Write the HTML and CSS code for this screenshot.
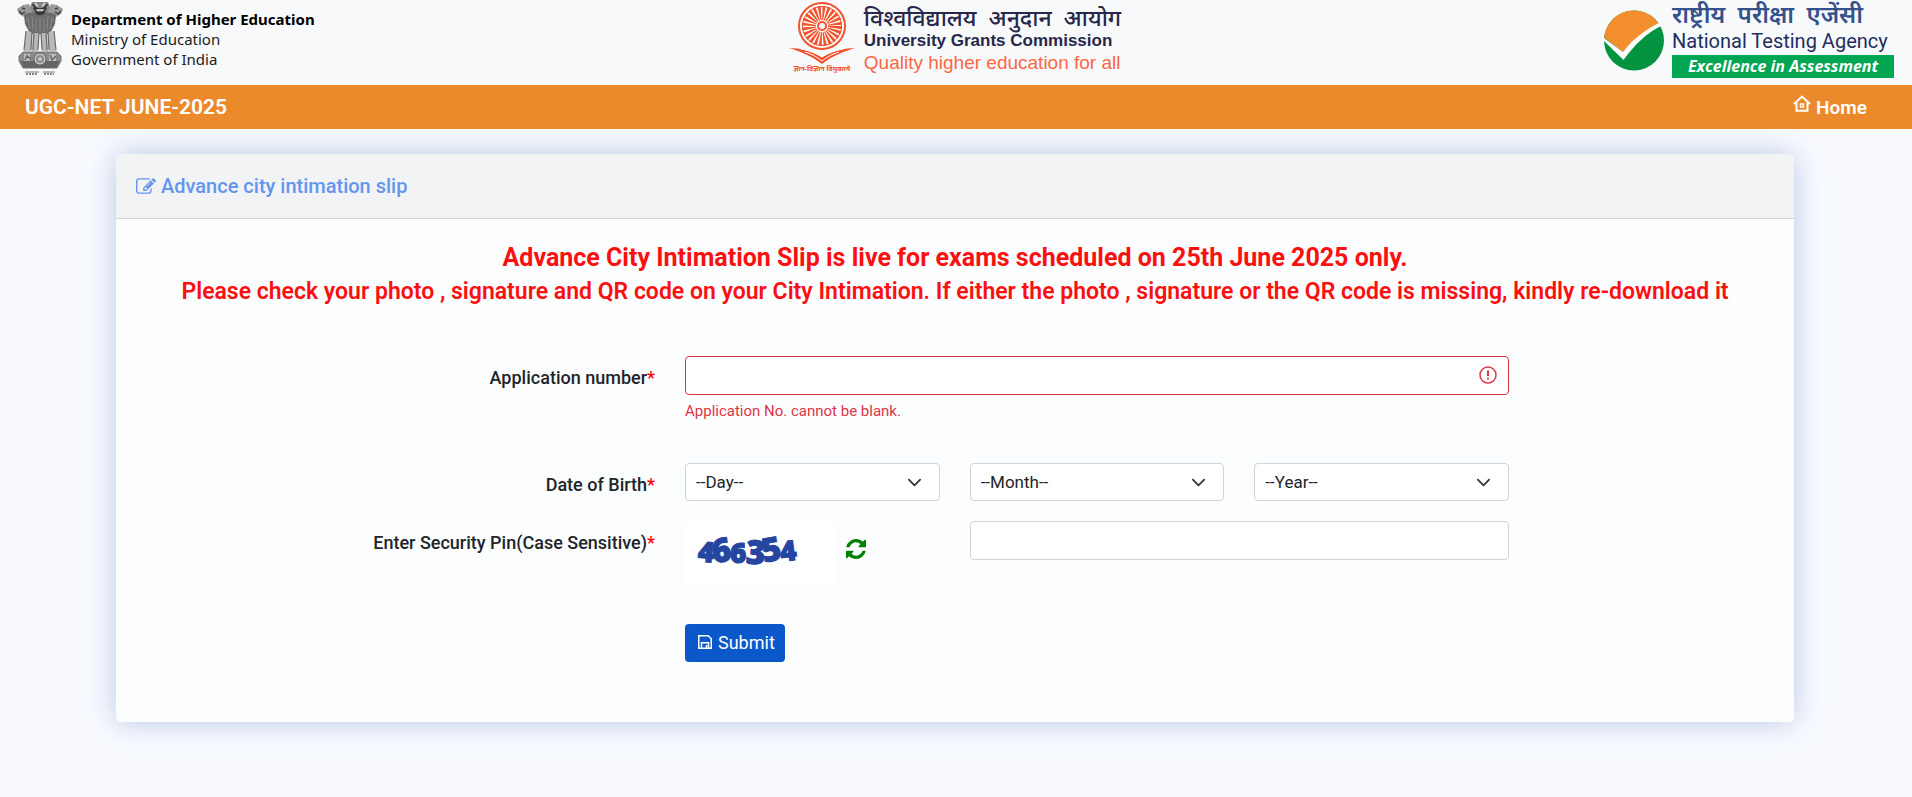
FILE: index.html
```html
<!DOCTYPE html>
<html lang="en">
<head>
<meta charset="utf-8">
<title>UGC-NET June 2025</title>
<link rel="stylesheet" href="styles.css">
</head>
<body>
<header class="masthead">
  <div class="brand brand-dept">
    <svg class="emblem" viewBox="0 0 48 76" aria-hidden="true">
      <path d="M16 2h16l3 8-2 8H15l-2-8z" fill="#858585"/>
      <path d="M7 5l6-1 3 7-1 8-3 3-4-5-5-3-2-5z" fill="#999"/>
      <path d="M41 5l-6-1-3 7 1 8 3 3 4-5 5-3 2-5z" fill="#999"/>
      <path d="M3 11l3 3 3-2M45 11l-3 3-3-2M6 8l3 1M42 8l-3 1" stroke="#444" stroke-width="1.5" fill="none"/>
      <path d="M8 15c4-4 28-4 32 0l-1 9-4 8-4 2H17l-4-2-4-8z" fill="#6b6b6b"/>
      <path d="M17 4c1 4 3 5 7 5s6-1 7-5M18 8c1 6 11 6 12 0M20 12c1 3 7 3 8 0" stroke="#303030" stroke-width="1.5" fill="none"/>
      <path d="M19 3l3 3M29 3l-3 3M21 10h6" stroke="#ddd" stroke-width="1.5"/>
      <path d="M12 17l2 12M16 16l1 15M20 18v14M24 17v15M28 18v14M32 16l-1 15M36 17l-2 12M10 20l3 2M38 20l-3 2" stroke="#8c8c8c" stroke-width="1"/>
      <path d="M10 31l-2 20h7l1-19zM17 33l-1 18h6l1-18zM25 33l1 18h6l-1-18zM32 32l1 19h7l-2-20z" fill="#b9b9b9"/>
      <path d="M10 31L8 50M16 32l-1 18M18 33l-1 17M23 33l-1 17M25 33l1 17M30 33l1 17M32 32l1 18M38 31l2 19" stroke="#6a6a6a" stroke-width="1.2" fill="none"/>
      <path d="M7 52h34l4 4v5l-4 7H7l-4-7v-5z" fill="#8a8a8a" stroke="#777"/>
      <path d="M4 61l4 7h32l4-7z" fill="#666"/>
      <path d="M8 54h6v7H8zM33 54h7v7h-7z" fill="#bbb"/>
      <path d="M9 60l2-4 4 3M34 55l2 5 4-4" stroke="#666" stroke-width="1.5" fill="none"/>
      <circle cx="24" cy="59" r="6" fill="#c8c8c8" stroke="#666"/>
      <circle cx="24" cy="59" r="3" fill="none" stroke="#888" stroke-width="2"/>
      <path d="M9 72h14M27 72h12" stroke="#777"/>
      <path d="M10 74h12M28 74h10" stroke="#888" stroke-width="2" stroke-dasharray="2 1"/>
    </svg>
    <div class="dept-text">
      <strong>Department of Higher Education</strong>
      <span>Ministry of Education</span>
      <span>Government of India</span>
    </div>
  </div>
  <div class="brand brand-ugc">
    <div class="ugc-mark">
      <svg class="ugc-wheel" viewBox="0 0 66 62" aria-hidden="true">
        <circle cx="33" cy="24" r="23" fill="#fff" stroke="#f4512c" stroke-width="2"/>
        <circle cx="33" cy="24" r="13" fill="none" stroke="#f4512c" stroke-width="14" stroke-dasharray="2.1 1.303"/>
        <circle cx="33" cy="24" r="19.5" fill="none" stroke="#f4512c" stroke-width="1"/>
        <circle cx="33" cy="24" r="5" fill="#f4512c"/>
        <circle cx="33" cy="24" r="3" fill="#fff"/>
        <path d="M0 46c10 0 22 3 33 9 11-6 23-9 33-9-10 3-23 8-33 16C23 54 10 49 0 46z" fill="#f4512c"/>
        <path d="M12 47c8 1 15 4 21 8 6-4 13-7 21-8M16 50c7 2 12 5 17 9 5-4 10-7 17-9" stroke="#fff" fill="none"/>
      </svg>
      <span class="ugc-motto">ज्ञान-विज्ञान विमुक्तये</span>
    </div>
    <div class="ugc-text">
      <span class="ugc-hindi">विश्वविद्यालय&nbsp; अनुदान&nbsp; आयोग</span>
      <strong>University Grants Commission</strong>
      <span class="ugc-tag">Quality higher education for all</span>
    </div>
  </div>
  <div class="brand brand-nta">
    <svg class="nta-mark" viewBox="0 0 60 61" aria-hidden="true">
      <circle cx="30" cy="30.5" r="30" fill="#049441"/>
      <path d="M0 29A30 30 0 0 1 55 14C44 19 30 30 19 42L1 28z" fill="#f58f2d"/>
      <path d="M0 28l19 14C29 29 42 19 55 13l2 3C43 23 31 34 19.500 50L0 31z" fill="#fff"/>
    </svg>
    <div class="nta-text">
      <span class="nta-hindi">राष्ट्रीय&nbsp; परीक्षा&nbsp; एजेंसी</span>
      <span class="nta-name">National Testing Agency</span>
      <em class="nta-tag">Excellence in Assessment</em>
    </div>
  </div>
</header>
<nav class="navbar">
  <span class="navbar-title">UGC-NET JUNE-2025</span>
  <a class="home-link" href="#">
    <svg class="icon-home" viewBox="0 0 18 18" fill="none" stroke="#fff" stroke-width="2" aria-hidden="true">
      <path d="M1 9l8-7.500L17 9M3.500 7.500v8.250h11V7.500"/><path d="M7.500 9h3v3h-3z" stroke-width="1.500"/>
    </svg>
    Home
  </a>
</nav>
<main class="page">
  <section class="card">
    <h1 class="card-header">
      <svg class="icon-edit" viewBox="0 0 1792 1408" aria-hidden="true">
        <path fill="#6495ed" d="M888 1056l116-116-152-152-116 116v56h96v96h56zm440-720q-16-16-33 1L945 687q-17 17-1 33t33-1l350-350q17-17 1-33zm80 594v190q0 119-84.500 203.500T1120 1408H288q-119 0-203.500-84.500T0 1120V288Q0 169 84.500 84.500T288 0h832q63 0 117 25 15 7 18 23 3 17-9 29l-49 49q-14 14-32 8-23-6-45-6H288q-66 0-113 47t-47 113v832q0 66 47 113t113 47h832q66 0 113-47t47-113V994q0-13 9-22l64-64q15-15 35-7t20 29zm-96-738l288 288-672 672H640V864zm444 132l-92 92-288-288 92-92q28-28 68-28t68 28l152 152q28 28 28 68t-28 68z"/>
      </svg>
      Advance city intimation slip
    </h1>
    <div class="card-body">
      <p class="notice">Advance City Intimation Slip is live for exams scheduled on 25th June 2025 only.</p>
      <p class="notice notice-small">Please check your photo , signature and QR code on your City Intimation. If either the photo , signature or the QR code is missing, kindly re-download it</p>
      <form class="form">
        <div class="form-row row-application">
          <label class="form-label" for="appno">Application number<span class="required">*</span></label>
          <div class="fields">
            <div class="field-wide invalid-wrap">
              <input class="control control-invalid" id="appno" type="text" aria-describedby="appno-error">
              <svg class="icon-error" viewBox="0 0 18 18" fill="none" stroke="#dc3545" aria-hidden="true">
                <circle cx="9" cy="9" r="8" stroke-width="1.500"/><path d="M9 4.500v5.500M9 11.800v1.700" stroke-width="2"/>
              </svg>
            </div>
            <div class="error field-wide" id="appno-error">Application No. cannot be blank.</div>
          </div>
        </div>
        <div class="form-row row-birth">
          <label class="form-label" for="day">Date of Birth<span class="required">*</span></label>
          <div class="fields">
            <select class="control select" id="day"><option>--Day--</option></select>
            <select class="control select" aria-label="Month"><option>--Month--</option></select>
            <select class="control select" aria-label="Year"><option>--Year--</option></select>
          </div>
        </div>
        <div class="form-row row-pin">
          <label class="form-label" for="pin">Enter Security Pin(Case Sensitive)<span class="required">*</span></label>
          <div class="fields">
            <div class="captcha">
              <svg class="captcha-image" viewBox="0 0 150 63" role="img" aria-label="Security pin image">
                <g class="captcha-digits">
                  <text x="13" y="41" font-size="28" transform="rotate(5 20 32)">4</text>
                  <text x="27" y="41" font-size="33" transform="rotate(-9 35 32)">6</text>
                  <text x="45" y="42" font-size="28">6</text>
                  <text x="61" y="43" font-size="33" transform="rotate(3 70 34)">3</text>
                  <text x="77" y="40" font-size="33" transform="rotate(-10 86 30)">5</text>
                  <text x="95" y="40" font-size="28" transform="rotate(-7 102 30)">4</text>
                </g>
              </svg>
              <button class="refresh" type="button" aria-label="Refresh security pin">
                <svg class="icon-refresh" viewBox="0 0 1536 1536" aria-hidden="true">
                  <path fill="#008000" d="M1511 928q0 5-1 7-64 268-268 434.500T764 1536q-146 0-282.500-55T238 1324l-129 129q-19 19-45 19t-45-19-19-45V960q0-26 19-45t45-19h448q26 0 45 19t19 45-19 45l-137 137q71 66 161 102t187 36q134 0 250-65t186-179q11-17 53-117 8-23 30-23h192q13 0 22.500 9.500t9.500 22.500zm25-800v448q0 26-19 45t-45 19h-448q-26 0-45-19t-19-45 19-45l138-138Q969 256 768 256q-134 0-250 65T332 500q-11 17-53 117-8 23-30 23H50q-13 0-22.500-9.500T18 608v-7q65-268 270-434.500T768 0q146 0 284 55.500T1297 212l130-129q19-19 45-19t45 19 19 45z"/>
                </svg>
              </button>
            </div>
            <input class="control pin-input" id="pin" type="text">
          </div>
        </div>
        <div class="form-row">
          <div class="form-actions">
            <button class="submit" type="submit">
              <svg class="icon-save" viewBox="0 0 14 14" fill="none" stroke="#fff" stroke-width="1.500" aria-hidden="true">
                <path d="M.75.75h9.500l3 3v9.500H.75zM3.500 13V7.750h7V13M8.500 13v-3"/>
              </svg>
              Submit
            </button>
          </div>
        </div>
      </form>
    </div>
  </section>
</main>
</body>
</html>
```

FILE: styles.css
```css
* { box-sizing: border-box; }
body {
  margin: 0;
  min-height: 100vh;
  background: #f8faff;
  color: #212529;
  font: 18px/27px Roboto, sans-serif;
}
.masthead {
  display: flex;
  justify-content: space-between;
  height: 85px;
  padding: 0 18px 0 16px;
  background: #f8f9fb;
}
.brand { display: flex; flex: 1; }
.brand span, .brand strong, .brand em { white-space: nowrap; }
.emblem { width: 48px; height: 76px; }
.dept-text {
  display: flex;
  flex-direction: column;
  padding: 9px 0 0 7px;
  color: #1c1c1c;
  font: 15px/20px "Noto Sans", sans-serif;
}
.dept-text strong { color: #000; }
.brand-ugc { justify-content: center; gap: 9px; }
.ugc-mark { display: flex; flex-direction: column; align-items: center; padding-top: 2px; }
.ugc-wheel { width: 66px; height: 62px; }
.ugc-motto { color: #f4512c; font: 700 7px/10px "Noto Sans", sans-serif; }
.ugc-text {
  display: flex;
  flex-direction: column;
  padding-top: 5px;
  color: #27274a;
  font: 17px/24px "Liberation Sans", sans-serif;
}
.ugc-hindi { font-family: "Noto Sans", sans-serif; font-size: 23px; font-weight: 500; }
.ugc-tag { color: #fb6644; font-size: 19px; line-height: 20px; }
.brand-nta { justify-content: flex-end; gap: 8px; }
.nta-mark { width: 60px; height: 61px; margin-top: 10px; }
.nta-text { display: flex; flex-direction: column; width: 222px; color: #1d2f60; }
.nta-hindi { color: #34518b; font: 600 24px/28px "Noto Sans", sans-serif; }
.nta-name { font-size: 20px; line-height: 26px; }
.nta-tag {
  margin-top: 1px;
  background: #00a651;
  color: #fff;
  font: italic 700 16px/23px "Open Sans", sans-serif;
  text-align: center;
}
.navbar {
  display: flex;
  justify-content: space-between;
  align-items: center;
  height: 44px;
  padding: 0 45px 0 25px;
  background: #eb8a2b;
  color: #fff;
  font-weight: 600;
}
.navbar-title { font-size: 21px; }
.home-link {
  display: flex;
  align-items: center;
  gap: 5px;
  color: #fff;
  font-size: 19px;
  text-decoration: none;
}
.icon-home { width: 18px; height: 18px; margin-bottom: 6px; }
.page { padding: 25px 118px 75px 116px; }
.card {
  border-radius: 5px;
  background: #fcfdff;
  box-shadow: 0 0 30px #b9c7e2;
}
.card-header {
  display: flex;
  align-items: center;
  gap: 5px;
  margin: 0;
  padding: 16px 20px;
  border-bottom: 1px solid #d0d3d6;
  border-radius: 5px 5px 0 0;
  background: #f2f3f5;
  color: #6495ed;
  font-size: 20px;
  font-weight: 500;
  line-height: 32px;
}
.icon-edit { width: 20px; height: 16px; }
.card-body { padding: 21px 16px 60px; }
.notice {
  margin: 0;
  color: #fb1010;
  font-size: 25px;
  font-weight: 700;
  line-height: 36px;
  text-align: center;
}
.notice-small { font-size: 23px; font-weight: 600; line-height: 32px; }
.form { padding-top: 48px; }
.form-row { display: grid; grid-template-columns: 553fr 824fr 269fr; }
.form-label {
  padding: 8px 30px 0 0;
  font-weight: 500;
  text-align: right;
}
.required { color: #f00; }
.fields {
  display: grid;
  grid-template-columns: repeat(3, 1fr);
  align-items: start;
  column-gap: 30px;
}
.field-wide { grid-column: 1 / -1; }
.control {
  display: block;
  width: 100%;
  height: 39px;
  padding: 5px 10px;
  border: 1px solid #ced4da;
  border-radius: 4px;
  background: #fff;
  color: #212529;
  font: 17px/27px Roboto, sans-serif;
}
.control-invalid { border-color: #dc3545; padding-right: 40px; }
.invalid-wrap { position: relative; }
.icon-error { position: absolute; top: 10px; right: 12px; width: 18px; height: 18px; }
.error { margin-top: 4px; color: #dc3545; font-size: 15px; line-height: 24px; }
.row-application { margin-bottom: 40px; }
.select {
  height: 38px;
  appearance: none;
  background: #fff url("data:image/svg+xml,%3Csvg xmlns='http://www.w3.org/2000/svg' viewBox='0 0 16 16'%3E%3Cpath fill='none' stroke='%23343a40' stroke-linecap='round' stroke-linejoin='round' stroke-width='2' d='M2 5l6 6 6-6'/%3E%3C/svg%3E") no-repeat right 17px center / 15px 15px;
}
.row-birth { margin-bottom: 20px; }
.captcha { display: flex; gap: 11px; }
.captcha-image { width: 150px; height: 63px; background: #fff; flex: none; }
.captcha-digits {
  fill: #2445a0;
  stroke: #2445a0;
  stroke-width: 1px;
  font-family: "Open Sans", sans-serif;
  font-weight: 800;
}
.refresh { height: 20px; margin-top: 18px; padding: 0; border: 0; background: none; }
.icon-refresh { display: block; width: 20px; height: 20px; }
.pin-input { grid-column: 2 / -1; }
.row-pin { margin-bottom: 40px; }
.form-actions { grid-column: 2; }
.submit {
  display: flex;
  align-items: center;
  gap: 6px;
  height: 38px;
  padding: 0 10px 2px 13px;
  border: 0;
  border-radius: 4px;
  background: #0a58ca;
  color: #fff;
  font: 18px/27px Roboto, sans-serif;
}
.icon-save { width: 14px; height: 14px; }
```
